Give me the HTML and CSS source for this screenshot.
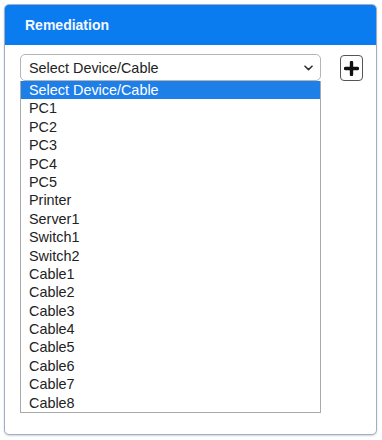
FILE: index.html
```html
<!DOCTYPE html>
<html lang="en">
<head>
  <meta charset="UTF-8" />
  <title>Remediation</title>
  <link rel="stylesheet" href="styles.css">
</head>
<body>
  <!-- Remediation card -->
  <div class="card">
    <div class="card-header">Remediation</div>

    <div class="card-body">
      <div class="select-row">
        <div class="select-wrap">
          <div class="select-box">
            <span>Select Device/Cable</span>
            <svg class="chevron" width="9" height="6" viewBox="0 0 9 6">
              <path d="M1 1.2 L4.5 4.6 L8 1.2" fill="none" stroke="#333" stroke-width="1.6" stroke-linecap="round" stroke-linejoin="round"/>
            </svg>
          </div>

          <!-- Open dropdown list -->
          <ul class="option-list">
            <li class="selected">Select Device/Cable</li>
            <li>PC1</li>
            <li>PC2</li>
            <li>PC3</li>
            <li>PC4</li>
            <li>PC5</li>
            <li>Printer</li>
            <li>Server1</li>
            <li>Switch1</li>
            <li>Switch2</li>
            <li>Cable1</li>
            <li>Cable2</li>
            <li>Cable3</li>
            <li>Cable4</li>
            <li>Cable5</li>
            <li>Cable6</li>
            <li>Cable7</li>
            <li>Cable8</li>
          </ul>
        </div>

        <button class="add-btn" type="button">
          <svg width="15" height="15" viewBox="0 0 15 15">
            <path d="M7.5 1.5 V13.5 M1.5 7.5 H13.5" stroke="#111" stroke-width="3.4" stroke-linecap="round"/>
          </svg>
        </button>
      </div>
    </div>
  </div>
</body>
</html>
```

FILE: styles.css
```css
/* Base */
* {
  margin: 0;
  padding: 0;
  box-sizing: border-box;
}

body {
  background-color: #fff;
  font-family: "Liberation Sans", Arial, sans-serif;
  color: #222;
  padding: 4px 5px 5px 4px;
}

/* Card */
.card {
  width: 373px;
  height: 431px;
  border: 1px solid #9fb0c4;
  border-radius: 5px;
  overflow: hidden;
  background-color: #fff;
  box-shadow: 0 1px 2px rgba(60, 90, 130, 0.25);
}

.card-header {
  height: 40px;
  background-color: #0b7bf0;
  color: #f4f8ff;
  font-size: 14px;
  font-weight: bold;
  padding: 12px 0 0 20px;
}

.card-body {
  padding: 9px 13px 0 15px;
}

/* Select row */
.select-row {
  display: flex;
  align-items: flex-start;
  gap: 19px;
}

.select-wrap {
  position: relative;
  width: 301px;
}

.select-box {
  height: 27px;
  border: 1px solid #b5b5b5;
  border-radius: 5px;
  display: flex;
  align-items: center;
  justify-content: space-between;
  padding: 0 7px 0 8px;
  font-size: 14.4px;
  color: #222;
}

.chevron {
  margin-top: 1px;
}

/* Dropdown list (opened) */
.option-list {
  position: absolute;
  top: 27px;
  left: 0;
  width: 301px;
  list-style: none;
  border: 1px solid #aaa;
  border-top: none;
  background-color: #fff;
}

.option-list li {
  height: 18.4px;
  line-height: 18.4px;
  padding-left: 8px;
  font-size: 14.4px;
  color: #222;
}

.option-list li.selected {
  background-color: #1f7fe9;
  color: #fff;
}

/* Add button */
.add-btn {
  width: 23px;
  height: 26px;
  margin-top: 1px;
  border: 1px solid #555;
  border-radius: 4px;
  background-color: #fff;
  display: flex;
  align-items: center;
  justify-content: center;
  cursor: pointer;
}
```
